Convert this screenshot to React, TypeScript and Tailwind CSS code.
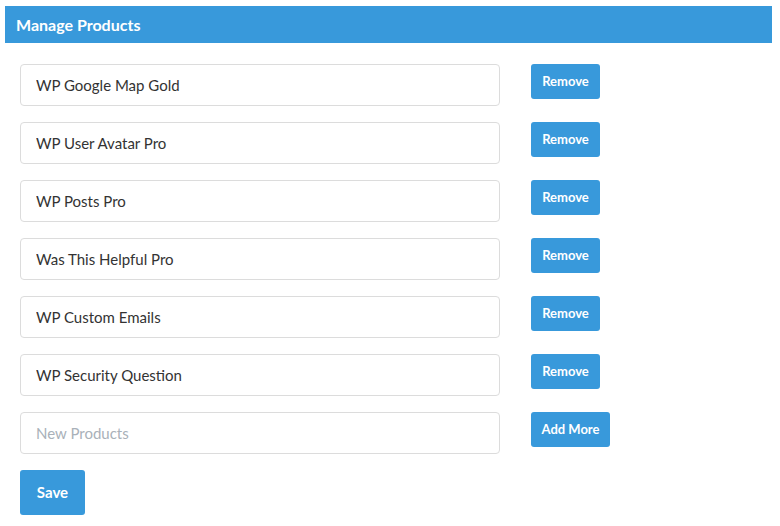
const PRODUCTS = [
  "WP Google Map Gold",
  "WP User Avatar Pro",
  "WP Posts Pro",
  "Was This Helpful Pro",
  "WP Custom Emails",
  "WP Security Question",
];

export default function App() {
  return (
    <div className="min-h-screen bg-white px-[5px] pt-[6px] font-['Lato',sans-serif] text-[#333]">
      <div className="flex h-[37px] w-[767px] items-center bg-[#3899db] pl-[11px] text-[16px] font-bold text-white">
        Manage Products
      </div>

      <div className="flex flex-col gap-[16px] pl-[15px] pt-[21px]">
        {PRODUCTS.map((name) => (
          <div key={name} className="flex items-start">
            <input
              defaultValue={name}
              className="h-[42px] w-[480px] rounded-[4px] border border-[#dcdcdc] bg-white px-[15px] text-[15px] text-[#333] outline-none"
            />
            <button className="ml-[31px] h-[35px] w-[69px] rounded-[3px] bg-[#3899db] text-[13px] font-bold text-white">
              Remove
            </button>
          </div>
        ))}

        <div className="flex items-start">
          <input
            placeholder="New Products"
            className="h-[42px] w-[480px] rounded-[4px] border border-[#dcdcdc] bg-white px-[15px] text-[15px] text-[#333] outline-none placeholder:text-[#a9b1b9]"
          />
          <button className="ml-[31px] h-[35px] w-[79px] rounded-[3px] bg-[#3899db] text-[13px] font-bold text-white">
            Add More
          </button>
        </div>

        <div>
          <button className="h-[45px] w-[65px] rounded-[3px] bg-[#3899db] text-[15px] font-bold text-white">
            Save
          </button>
        </div>
      </div>
    </div>
  );
}
